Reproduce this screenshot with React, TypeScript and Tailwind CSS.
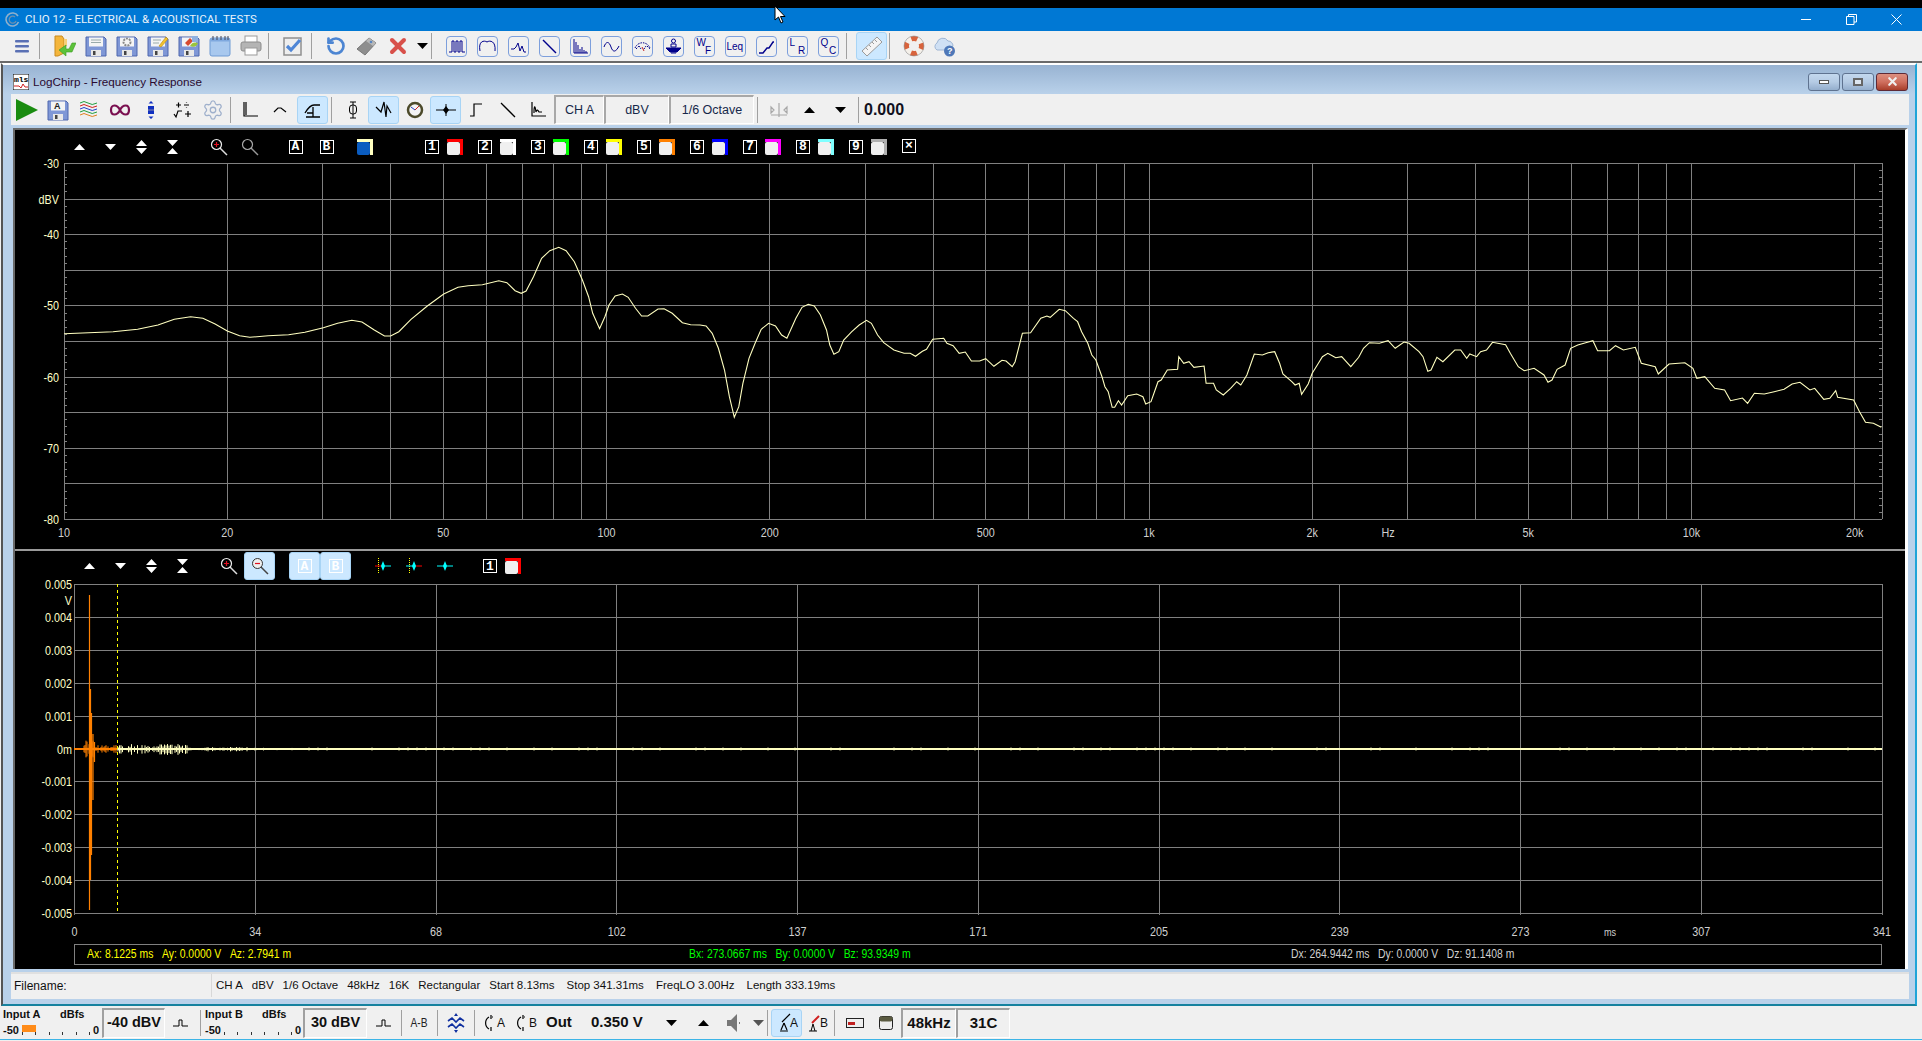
import { RotateCcw, Settings, X } from "lucide-react";
import type { ReactNode } from "react";

// ---- trace data, read off the reference (x, y in page pixels) ----
const seg1 = [[10,311],[70,308],[130,305],[190,298],[240,285],[280,268],[320,260],[350,265],[380,282],[410,303],[440,317],[465,322],[510,317],[560,314],[600,307],[645,293],[680,280],[715,271],[740,276],[770,300],[795,318],[810,318],[830,305],[860,268],[900,228],[940,192],[975,172],[1000,167],[1035,164],[1075,152],[1095,158],[1115,182],[1130,190],[1142,183],[1160,140],[1180,85],[1200,62],[1222,52],[1240,62],[1260,95],[1280,150],[1295,200],[1305,250],[1322,296],[1335,260],[1345,225],[1360,198],[1378,192],[1392,202],[1410,235],[1425,258],[1440,258],[1465,237],[1480,236],[1500,250],[1525,278],[1545,284]];
const seg2 = [[0,135],[15,138],[30,160],[45,205],[60,270],[72,350],[84,412],[95,380],[105,310],[120,235],[135,190],[150,148],[168,130],[185,138],[200,165],[213,175],[235,115],[250,82],[265,73],[280,78],[295,105],[310,150],[318,195],[328,223],[340,215],[352,180],[372,155],[390,135],[408,121],[420,130],[435,165],[450,188],[475,210],[500,220],[515,220],[528,229],[545,214],[555,208],[570,178],[597,175],[605,190],[620,197],[635,220],[650,216],[665,243],[685,243],[700,236],[720,259],[740,241],[750,243],[765,260],[772,245],[790,160],[810,158],[835,115],[850,108],[858,112],[880,88],[895,92],[915,115],[925,125],[935,155],[950,190],[960,225],[970,240],[985,290],[992,320],[1000,335],[1010,382],[1016,382],[1025,362],[1033,375],[1048,347],[1070,342],[1085,350],[1092,372],[1105,365],[1122,305],[1130,300],[1145,270],[1170,268],[1173,230],[1185,250],[1198,245],[1210,262],[1235,258],[1240,310],[1258,310],[1265,330],[1282,345],[1300,325],[1315,305],[1325,315],[1340,285],[1358,222],[1378,225],[1392,218],[1408,215],[1420,250],[1428,282],[1450,305],[1458,315],[1468,310],[1474,343],[1490,312],[1500,280],[1515,250],[1525,230],[1538,220],[1550,228]];
const seg3 = [[90,143],[105,140],[128,170],[148,142],[160,115],[175,98],[200,100],[222,92],[240,115],[262,96],[275,100],[300,125],[310,140],[322,184],[330,180],[345,142],[360,155],[390,120],[405,120],[420,145],[428,132],[445,140],[455,125],[470,120],[485,97],[518,104],[530,130],[550,170],[565,182],[590,175],[615,195],[625,217],[635,210],[648,178],[668,165],[682,115],[700,105],[720,98],[738,92],[750,122],[780,122],[795,107],[815,120],[845,112],[860,160],[895,170],[903,192],[930,162],[970,158],[990,175],[1000,205],[1020,200],[1045,235],[1070,240],[1085,272],[1115,264],[1128,280],[1145,250],[1170,252],[1195,245],[1220,238],[1240,222],[1260,217],[1285,240],[1297,235],[1320,268],[1335,265],[1350,242],[1355,262],[1395,270],[1410,305],[1425,337],[1445,340],[1465,352]];

const curve = [
  ...seg1.map(([x, y]) => [60 + x / 2.45, 230 + y / 3]),
  ...seg2.map(([x, y]) => [700 + x / 2.45, 280 + y / 3]),
  ...seg3.map(([x, y]) => [1300 + x / 2.52, 310 + y / 3]),
]
  .map(([x, y]) => `${x.toFixed(1)},${y.toFixed(1)}`)
  .join(" ");

const freqX = (f: number) => 64 + 542.5 * Math.log10(f / 10);
const freqs: number[] = [];
[10, 100, 1000].forEach((d) => {
  for (let i = 1; i < 10; i++) freqs.push(d * i);
});
freqs.push(10000, 20000);

// small repeatable noise for the impulse tail
function noise(n: number) {
  const v = Math.sin(n * 12.9898) * 43758.5453;
  return v - Math.floor(v);
}
let tail = "";
for (let x = 118; x < 300; x += 1.5) {
  const a = (x < 190 ? 5 : x < 250 ? 2 : 1.2) * noise(x);
  tail += `M${x} ${749 - a}V${749 + a * 1.2}`;
}
for (let x = 300; x < 1880; x += 9) {
  if (noise(x) > 0.6) tail += `M${x} 747.5V750.5`;
}
let orangeTail = "";
for (let x = 84; x < 117; x += 1) {
  const a = (x < 96 ? 9 : 4) * noise(x + 3);
  orangeTail += `M${x} ${749 - a}V${749 + a}`;
}

// the chart font in the reference is a narrow one, squeeze the Arial metric font
function Lbl({ x, y, children, k = 0.83, fontSize }: { x: number; y: number; children: ReactNode; k?: number; fontSize?: number }) {
  return (
    <text transform={`translate(${x} ${y}) scale(${k} 1)`} fontSize={fontSize}>
      {children}
    </text>
  );
}

// ---- toolbar pieces ----
function Btn({ w = "w-[31px]", active, children }: { w?: string; active?: boolean; children?: ReactNode }) {
  return (
    <div
      className={`flex h-[28px] shrink-0 items-center justify-center ${w} ${
        active ? "rounded-[3px] border border-[#a8d4f5] bg-[#cce8ff]" : ""
      }`}
    >
      {children}
    </div>
  );
}

function Sep({ className = "" }: { className?: string }) {
  return <div className={`h-[26px] w-[1px] shrink-0 bg-[#a0a0a0] ${className}`} />;
}

function Ico({ children, s = 22, v = 22 }: { children: ReactNode; s?: number; v?: number }) {
  return (
    <svg width={s} height={s} viewBox={`0 0 ${v} ${v}`} fill="none">
      {children}
    </svg>
  );
}

function Floppy({ children }: { children?: ReactNode }) {
  return (
    <Ico>
      <path d="M1 2h18l2 2v17H1z" fill="#7f97d6" stroke="#4f66ad" />
      <rect x="4" y="2.5" width="14" height="9" fill="#f4f4f4" />
      <rect x="6" y="15" width="10" height="6" fill="#e8e8e8" />
      <rect x="8" y="16" width="2.5" height="4" fill="#444" />
      {children}
    </Ico>
  );
}

function Outline({ children }: { children: ReactNode }) {
  return (
    <div className="flex h-[21px] w-[21px] items-center justify-center rounded-[4px] border border-[#7d9fdc]">
      <svg width="19" height="19" viewBox="0 0 19 19" fill="none" stroke="#00008b" strokeWidth="1">
        {children}
      </svg>
    </div>
  );
}

function OutlineText({ a, b }: { a: string; b: string }) {
  return (
    <Outline>
      <text x="1.5" y="9" fontSize="10" fill="#00008b" stroke="none" fontFamily="Liberation Sans">{a}</text>
      <text x="10" y="17" fontSize="10" fill="#00008b" stroke="none" fontFamily="Liberation Sans">{b}</text>
    </Outline>
  );
}

function Line({ d, w = 1.2, c = "#000" }: { d: string; w?: number; c?: string }) {
  return (
    <Ico>
      <path d={d} stroke={c} strokeWidth={w} />
    </Ico>
  );
}

function Tri({ up, c = "#000" }: { up?: boolean; c?: string }) {
  return (
    <svg width="11" height="6" viewBox="0 0 11 6">
      <path d={up ? "M5.5 0L11 6H0z" : "M0 0H11L5.5 6z"} fill={c} />
    </svg>
  );
}

function UpDown() {
  return (
    <svg width="11" height="14" viewBox="0 0 11 14" fill="#fff">
      <path d="M5.5 0L11 6H0zM0 8H11L5.5 14z" />
    </svg>
  );
}

function Hourglass() {
  return (
    <svg width="11" height="14" viewBox="0 0 11 14" fill="#fff">
      <path d="M0 0H11L5.5 6zM5.5 8L11 14H0z" />
    </svg>
  );
}

function Lens({ sign, dim }: { sign?: "+" | "-"; dim?: boolean }) {
  return (
    <svg width="18" height="18" viewBox="0 0 18 18" fill="none">
      <path d="M10 10l7 7" stroke={dim ? "#999" : "#ddd"} strokeWidth="1.5" />
      <circle cx="6.5" cy="6.5" r="5" stroke={dim ? "#aaa" : "#eee"} strokeWidth="1.2" fill="#000" />
      {sign && <path d={sign === "+" ? "M4 6.5h5M6.5 4v5" : "M4 6.5h5"} stroke="#e01020" strokeWidth="1.2" />}
    </svg>
  );
}

function Boxed({ t }: { t: string }) {
  return (
    <div className="flex h-[14px] w-[14px] shrink-0 items-center justify-center border border-white font-['Liberation_Mono',monospace] text-[13px] font-bold leading-none text-white">
      {t}
    </div>
  );
}

function Swatch({ color, inner = "bg-[#f0f0f0]" }: { color: string; inner?: string }) {
  return (
    <div className={`flex h-[16px] w-[16px] shrink-0 border-t-[3px] border-r-[3px] ${color}`}>
      <div className={`h-[13px] w-[13px] rounded-[2px] ${inner}`} />
    </div>
  );
}

function Star({ left, right, top }: { left?: string; right?: string; top?: boolean }) {
  return (
    <svg width="16" height="16" viewBox="0 0 16 16" fill="none">
      {top && <path d="M3.5 0V16" stroke="#ffff00" strokeDasharray="1 1" />}
      <path d="M0 8H8" stroke={left ?? "#00ffff"} />
      <path d="M8 8H16" stroke={right ?? "#00ffff"} />
      <path d="M8 3L10 8L8 13L6 8z" fill="#00ffff" />
    </svg>
  );
}

const channels = [
  ["1", "border-[#ff0000]"],
  ["2", "border-[#ffffff]"],
  ["3", "border-[#00ff00]"],
  ["4", "border-[#ffff00]"],
  ["5", "border-[#ff8000]"],
  ["6", "border-[#0000ff]"],
  ["7", "border-[#ff00ff]"],
  ["8", "border-[#80ffff]"],
  ["9", "border-[#b0b0b0]"],
];

function Pulse() {
  return <Line d="M3 14h6V8h3v6h6" w={1} />;
}

function Meter({ name, bar }: { name: string; bar?: boolean }) {
  return (
    <div className="flex w-[98px] shrink-0 flex-col text-[11px] font-bold leading-none">
      <div className="flex h-[15px] items-center">
        <span className="w-[57px]">{name}</span>
        <span>dBfs</span>
      </div>
      <div className="relative flex h-[16px] items-center">
        <span className="w-[19px]">-50</span>
        <div className="flex h-[10px] w-[68px] items-end justify-between">
          {[0, 1, 2, 3, 4, 5].map((i) => (
            <div key={i} className="h-[3px] w-[1px] bg-[#333]" />
          ))}
        </div>
        <span className="ml-[3px]">0</span>
        {bar && <div className="absolute left-[19px] top-[3px] h-[7px] w-[14px] bg-[#ff8c1a]" />}
      </div>
    </div>
  );
}

function ValueBox({ w, children, size = "text-[15px]" }: { w: string; children: ReactNode; size?: string }) {
  return (
    <div className={`flex h-[30px] shrink-0 items-center justify-center border-t-2 border-l-2 border-t-[#a0a0a0] border-l-[#a0a0a0] border-r border-b border-r-white border-b-white font-bold ${w} ${size}`}>
      {children}
    </div>
  );
}

function TabBox({ w, children }: { w: string; children: ReactNode }) {
  return (
    <div className={`flex h-[29px] shrink-0 items-center justify-center border-t-2 border-l-2 border-t-[#a8a8a8] border-l-[#a8a8a8] border-r border-b border-r-white border-b-white text-[12.5px] text-[#16284a] ${w}`}>
      {children}
    </div>
  );
}

function WinBtn({ red, children }: { red?: boolean; children: ReactNode }) {
  return (
    <div
      className={`flex h-[18px] w-[32px] items-center justify-center rounded-[3px] border ${
        red
          ? "border-[#5e2a36] bg-gradient-to-b from-[#dc8f80] via-[#cf6f5e] to-[#a83e2a]"
          : "border-[#5f7390] bg-gradient-to-b from-[#c3d8ee] via-[#b5cbe4] to-[#94aecd]"
      }`}
    >
      {children}
    </div>
  );
}

function FreqChart() {
  const labels: [string, number][] = [["10", 10], ["20", 20], ["50", 50], ["100", 100], ["200", 200], ["500", 500], ["1k", 1000], ["2k", 2000], ["5k", 5000], ["10k", 10000], ["20k", 20000]];
  return (
    <svg viewBox="15 163 1890 386" width="1890" height="386" className="block overflow-visible font-['Liberation_Sans',sans-serif]">
      <g stroke="#808080" shapeRendering="crispEdges">
        {freqs.map((f) => (
          <path key={f} d={`M${freqX(f)} 163V519`} />
        ))}
        <path d="M1882 163V519" />
        {Array.from({ length: 11 }, (_, i) => (
          <path key={i} d={`M64 ${163.5 + i * 35.6}H1882`} />
        ))}
        {Array.from({ length: 50 }, (_, i) => (
          <path key={i} d={`M64 ${163.5 + i * 7.12}h3M1879 ${163.5 + i * 7.12}h3`} />
        ))}
      </g>
      <polyline points={curve} fill="none" stroke="#ffffc0" strokeWidth="1.1" />
      <g fill="#ffffc8" fontSize="13" textAnchor="end">
        {[-30, -40, -50, -60, -70, -80].map((v, i) => (
          <Lbl key={v} x={59} y={168 + i * 71.2}>{v}</Lbl>
        ))}
        <Lbl x={59} y={204}>dBV</Lbl>
      </g>
      <g fill="#d0d0d0" fontSize="13" textAnchor="middle">
        {labels.map(([t, f]) => (
          <Lbl key={t} x={freqX(f)} y={537}>{t}</Lbl>
        ))}
        <Lbl x={1388} y={537}>Hz</Lbl>
      </g>
    </svg>
  );
}

function ImpulseChart() {
  const ticks = ["0", "34", "68", "102", "137", "171", "205", "239", "273", "307", "341"];
  const ys = ["0.005", "0.004", "0.003", "0.002", "0.001", "0m", "-0.001", "-0.002", "-0.003", "-0.004", "-0.005"];
  return (
    <svg viewBox="15 584 1890 360" width="1890" height="360" className="block overflow-visible font-['Liberation_Sans',sans-serif]">
      <g stroke="#808080" shapeRendering="crispEdges">
        {ticks.map((_, i) => (
          <path key={i} d={`M${74.5 + i * 180.75} 584V915`} />
        ))}
        {ys.map((_, i) => (
          <path key={i} d={`M74 ${584.5 + i * 32.9}H1882`} />
        ))}
      </g>
      <path d="M118 749H1882" stroke="#ffffc0" strokeWidth="2" />
      <path d={tail} stroke="#ffffc0" strokeWidth="1" />
      <path d="M74 749H117" stroke="#ff8000" strokeWidth="2" />
      <path d={orangeTail} stroke="#ff8000" strokeWidth="1" />
      <path d="M89.5 595V910M90.5 689V880M91.5 713V855M93 734V800M94.5 742V762" stroke="#ff8000" strokeWidth="1.2" />
      <path d="M117.5 584V913" stroke="#ffff00" strokeDasharray="3 3" shapeRendering="crispEdges" />
      <g fill="#ffffc8" fontSize="13" textAnchor="end">
        {ys.map((t, i) => (
          <Lbl key={t} x={72} y={589 + i * 32.9}>{t}</Lbl>
        ))}
        <Lbl x={72} y={605}>V</Lbl>
      </g>
      <g fill="#d0d0d0" fontSize="13" textAnchor="middle">
        {ticks.map((t, i) => (
          <Lbl key={t} x={i === 0 ? 74.5 : i === 10 ? 1882 : 74.5 + i * 180.75} y={936}>{t}</Lbl>
        ))}
        <Lbl x={1610} y={936} fontSize={11}>ms</Lbl>
      </g>
    </svg>
  );
}

export default function App() {
  return (
    <div className="relative flex h-[1041px] w-full flex-col overflow-hidden bg-black font-['Liberation_Sans',sans-serif] text-black">
      {/* app title bar */}
      <div className="mt-[8px] flex h-[23px] shrink-0 items-center bg-[#0078d4] pl-[4px] text-white">
        <svg width="17" height="17" viewBox="0 0 17 17" fill="none">
          <path d="M14 5A6.5 6.5 0 1 0 14.500 11" stroke="#8fb0cc" strokeWidth="1.6" />
          <path d="M11 6A3.500 3.500 0 1 0 12 10" stroke="#6d8fae" strokeWidth="1.3" />
        </svg>
        <span className="ml-[4px] font-['Roboto',sans-serif] text-[11.5px] text-[#e8f2fb]">CLIO 12 - ELECTRICAL &amp; ACOUSTICAL TESTS</span>
        <div className="ml-auto flex items-center">
          <div className="flex w-[46px] justify-center">
            <div className="h-[1px] w-[10px] bg-white" />
          </div>
          <div className="flex w-[44px] justify-center">
            <svg width="11" height="11" viewBox="0 0 11 11" fill="none" stroke="#fff">
              <path d="M.5 2.500h7.500v8H.5zM2.500 2.500V.5h8v7.500H8" />
            </svg>
          </div>
          <div className="flex w-[46px] justify-center">
            <svg width="11" height="11" viewBox="0 0 11 11" stroke="#fff">
              <path d="M.5.5l10 10M10.500.5l-10 10" />
            </svg>
          </div>
          <div className="w-[3px]" />
        </div>
      </div>

      {/* main toolbar */}
      <div className="flex h-[30px] shrink-0 items-center bg-[#f0f0f0] pl-[6px]">
        <Btn>
          <svg width="14" height="14" viewBox="0 0 14 14" fill="#5a70b4">
            <rect y="1" width="14" height="2.4" rx="1" />
            <rect y="6" width="14" height="2.4" rx="1" />
            <rect y="11" width="14" height="2.4" rx="1" />
          </svg>
        </Btn>
        <Sep className="ml-[2px] mr-[9px]" />
        <Btn>
          <Ico>
            <path d="M1 1h7l2 3v14l-6 3H1z" fill="#f4b63c" stroke="#c98a1f" />
            <path d="M10 4h3v7h-3z" fill="#f7cf77" />
            <path d="M22 8l-4 9h-6v4L5 15l7-5v4h3l3-6z" fill="#5cc23a" stroke="#3b9a22" strokeWidth=".6" />
          </Ico>
        </Btn>
        <Btn><Floppy><path d="M6 5h10M6 7.500h10" stroke="#9aa" /></Floppy></Btn>
        <Btn><Floppy><circle cx="11" cy="7" r="3.500" fill="none" stroke="#888" strokeWidth="2" strokeDasharray="2 1" /></Floppy></Btn>
        <Btn><Floppy><path d="M6 5h8M6 8h6" stroke="#9aa" /><path d="M12 11L19 2l2 2-7 8z" fill="#f2c230" stroke="#b98c10" strokeWidth=".6" /></Floppy></Btn>
        <Btn><Floppy><path d="M7 8l5-5 3 3-5 5z" fill="#d84a30" /><path d="M12 11c2-4 5-4 8-3-1 3-4 5-8 3z" fill="#9ac43c" /><rect x="14" y="1" width="6" height="6" fill="#8fb0e0" /></Floppy></Btn>
        <Btn>
          <Ico>
            <rect x="1" y="3" width="20" height="18" rx="2" fill="#a8c8ee" stroke="#6f9bd4" />
            <rect x="1.5" y="3.500" width="19" height="3" fill="#7fa8de" />
            <path d="M4 1v4M8 1v4M12 1v4M16 1v4M19 1v4" stroke="#445" strokeWidth="1" />
          </Ico>
        </Btn>
        <Btn>
          <Ico>
            <rect x="5" y="1" width="12" height="7" fill="#fff" stroke="#999" />
            <rect x="1" y="7" width="20" height="9" rx="2" fill="#b4b4b4" stroke="#8c8c8c" />
            <rect x="5" y="13" width="12" height="7" fill="#fff" stroke="#999" />
          </Ico>
        </Btn>
        <Sep className="ml-[2px] mr-[8px]" />
        <Btn>
          <Ico>
            <rect x="2" y="3" width="17" height="17" fill="#eee" stroke="#8f8f8f" strokeWidth="1.5" />
            <path d="M5 11l4 4 9-10" stroke="#4f86d6" strokeWidth="3.2" />
          </Ico>
        </Btn>
        <Sep className="ml-[3px] mr-[8px]" />
        <Btn><RotateCcw size={20} stroke="#4c85d2" strokeWidth={3.2} /></Btn>
        <Btn>
          <Ico>
            <path d="M1 14L13 3l7 5L9 20z" fill="#8e8e8e" stroke="#777" />
            <path d="M13 3l7 5-3 3-7-5z" fill="#b8b8b8" />
            <circle cx="15" cy="7" r="1.3" fill="#5a86c0" />
          </Ico>
        </Btn>
        <Btn><X size={24} stroke="#d8504a" strokeWidth={4} /></Btn>
        <Btn w="w-[18px]"><Tri /></Btn>
        <Sep className="mr-[9px]" />
        <Btn><Outline><path d="M2 15h3V4h2v11h2V4h2v11h2V4h2v11h3" /></Outline></Btn>
        <Btn><Outline><path d="M2 14C0 4 6 3 9 5c3-2 9-1 8 9" /></Outline></Btn>
        <Btn><Outline><path d="M2 12h3l2-2 2-4 2 8 2-5 2 6h2" /></Outline></Btn>
        <Btn><Outline><path d="M3 3l13 13" strokeWidth="1.4" /></Outline></Btn>
        <Btn><Outline><path d="M3 2v14h14M5 16V5M7 16V8M9 16v-4M11 16v-6M13 16v-3M15 16v-2" /></Outline></Btn>
        <Btn><Outline><path d="M2 10c2-6 5-6 7 0s5 5 8-1" /></Outline></Btn>
        <Btn><Outline><path d="M2 11C5 4 14 4 17 11M3 12l3-3M6 9l2 3M11 12l2-3M14 9l3 3" strokeDasharray="1.5 1" /><path d="M9 10l2 4" stroke="#c02020" /></Outline></Btn>
        <Btn>
          <Outline>
            <circle cx="9.5" cy="4" r="2" />
            <path d="M7 7h5v3H7z" />
            <path d="M2 11h15l-4 4H6z" fill="#00008b" />
            <path d="M7 16h5" />
          </Outline>
        </Btn>
        <Btn><OutlineText a="W" b="F" /></Btn>
        <Btn>
          <Outline>
            <text x=".5" y="13" fontSize="10" fill="#00008b" stroke="none" fontFamily="Liberation Sans">Leq</text>
          </Outline>
        </Btn>
        <Btn><Outline><path d="M2 16h4l4-5h2l4-6h1" strokeWidth="1.4" /></Outline></Btn>
        <Btn><OutlineText a="L" b="R" /></Btn>
        <Btn><OutlineText a="Q" b="C" /></Btn>
        <Sep className="ml-[2px] mr-[9px]" />
        <Btn active>
          <Ico>
            <path d="M1 16L16 2l5 5L6 21z" fill="#f4f4f4" stroke="#9a9a9a" />
            <path d="M5 13l2 2M8 10l2 2M11 7l2 2M14 5l2 2" stroke="#9a9a9a" />
          </Ico>
        </Btn>
        <Sep className="ml-[2px] mr-[8px]" />
        <Btn>
          <Ico>
            <circle cx="11" cy="11" r="7.500" stroke="#f4f0ea" strokeWidth="5" />
            <circle cx="11" cy="11" r="7.500" stroke="#d8633c" strokeWidth="5" strokeDasharray="6 5.800" strokeDashoffset="3" />
            <circle cx="11" cy="11" r="10" stroke="#8e8e8e" strokeWidth=".6" />
          </Ico>
        </Btn>
        <Btn>
          <Ico>
            <path d="M3 15a4 4 0 0 1 0-7 6 6 0 0 1 11-2 5 5 0 0 1 5 5l-5 4z" fill="#cfe0f4" stroke="#9fb6d4" />
            <circle cx="15.500" cy="16" r="5.500" fill="#4f78b8" />
            <text x="13" y="19" fontSize="9" fontWeight="bold" fill="#fff" fontFamily="Liberation Sans">?</text>
          </Ico>
        </Btn>
      </div>

      <div className="h-[2px] shrink-0 bg-[#6a6a6a]" />

      <div className="flex flex-1 flex-col bg-[#f0f0f0]">
        <div className="ml-[1px] mr-[5px] flex h-[943px] flex-col border-x-2 border-t-2 border-b-2 border-l-[#555] border-r-[#1fa4d8] border-t-white border-b-[#16829f] bg-[#b9d1ea]">
          {/* child title */}
          <div className="flex h-[29px] shrink-0 items-center bg-gradient-to-b from-[#98b3d2] to-[#b9d1ea] pl-[10px] pr-[7px] pt-[4px]">
            <svg width="16" height="16" viewBox="0 0 16 16">
              <rect width="16" height="16" fill="#fff" stroke="#000" />
              <text x="1" y="8" fontSize="8" fontWeight="bold" fill="#000" fontFamily="Liberation Mono">mls</text>
              <path d="M1 12h5l2 2 2-4 2 3h3" stroke="#d02020" fill="none" />
            </svg>
            <span className="ml-[4px] text-[11.7px] text-[#2a0a30]">LogChirp - Frequency Response</span>
            <div className="ml-auto flex gap-[2px]">
              <WinBtn><div className="h-[4px] w-[10px] border border-[#555] bg-white" /></WinBtn>
              <WinBtn><div className="h-[8px] w-[10px] border-2 border-[#666] bg-[#dde6f0]" /></WinBtn>
              <WinBtn red><X size={13} stroke="#f0f0f0" strokeWidth={4} /></WinBtn>
            </div>
          </div>

          {/* child toolbar */}
          <div className="ml-[8px] mr-[6px] flex h-[31px] shrink-0 items-center bg-[#f0f0f0]">
            <Btn>
              <svg width="22" height="22" viewBox="0 0 22 22"><path d="M0 0L22 11L0 22z" fill="#1a8c10" /></svg>
            </Btn>
            <Btn><Floppy><text x="7" y="10" fontSize="9" fontWeight="bold" fill="#222" fontFamily="Liberation Sans">A</text></Floppy></Btn>
            <Btn>
              <Ico>
                <path d="M2 4q4-3 8 0t9 0" stroke="#20a040" />
                <path d="M2 7q4-3 8 0t9 0" stroke="#d02020" />
                <path d="M2 10q4-3 8 0t9 0" stroke="#2040d0" />
                <path d="M2 13q4-3 8 0t9 0" stroke="#20a040" />
                <path d="M2 16q4-3 8 0t9 0" stroke="#e08020" />
              </Ico>
            </Btn>
            <Btn><Line d="M11 11C8 5 2 5 2 11s6 6 9 0 9-6 9 0-6 6-9 0" w={2.2} c="#7a1050" /></Btn>
            <Btn>
              <Ico>
                <path d="M11 2l-2.500 2.500h5zM11 20l-2.500-2.500h5z" fill="#1030c0" />
                <rect x="8" y="7" width="6" height="8" fill="#1030c0" />
                <path d="M8 11h6" stroke="#88a" />
              </Ico>
            </Btn>
            <Btn><Line d="M5 6h5M7.500 3.500v5M13 6h5M15.500 3.500v.5M15.500 8v.5M3 15l2 3 2-6h4M14 15h6M17 12v6" /></Btn>
            <Btn><Settings size={22} stroke="#9fb0cc" strokeWidth={1.4} /></Btn>
            <Sep className="ml-[2px] mr-[4px]" />
            <Btn><Line d="M4 3v14h14M6 3v13" /></Btn>
            <Btn><Line d="M3 13l4-4h3l5 4" /></Btn>
            <Btn active><Line d="M3 14c3-5 6-8 9-8h6M11 8v10M4 18h14M5 14h6" w={1.3} /></Btn>
            <Sep className="ml-[3px] mr-[5px]" />
            <Btn>
              <Ico>
                <rect x="7.500" y="6" width="7" height="9" rx="3" stroke="#000" />
                <path d="M11 3v16M8 3h6M8 19h6" stroke="#000" />
              </Ico>
            </Btn>
            <Btn active><Line d="M3 8l5 5 3-10 2 15 1-11 4 7" /></Btn>
            <Btn>
              <Ico>
                <circle cx="11" cy="11" r="7" fill="#f4f4f4" stroke="#4c4a2a" strokeWidth="2.500" />
                <path d="M11 11l4-4" stroke="#d02020" />
                <path d="M11 11L7 8" stroke="#2040c0" />
              </Ico>
            </Btn>
            <Btn active>
              <Ico>
                <path d="M1 11h20M11 5v12" stroke="#000" />
                <path d="M11 7l3 4-3 4-3-4z" fill="#000" />
              </Ico>
            </Btn>
            <Btn><Line d="M4 17h4V5h8" /></Btn>
            <Btn><Line d="M4 4l14 14" w={1.3} /></Btn>
            <Btn><Line d="M4 3v14h14M6 14c0-8 1-8 2-1 1-3 2-2 3 0h3" /></Btn>
            <TabBox w="w-[50px]">CH A</TabBox>
            <TabBox w="w-[65px]">dBV</TabBox>
            <TabBox w="w-[85px]">1/6 Octave</TabBox>
            <Sep className="ml-[3px] mr-[5px]" />
            <Btn><Line d="M3 8l3 3-3 3zM19 8l-3 3 3 3zM11 4v14M3 16h16" c="#a8a8a8" /></Btn>
            <Btn><Tri up /></Btn>
            <Btn><Tri /></Btn>
            <Sep className="ml-[2px]" />
            <span className="ml-[5px] text-[16px] font-bold text-[#101020]">0.000</span>
          </div>

          {/* chart panels */}
          <div className="ml-[10px] mr-[7px] mt-[3px] flex-1 border-t-2 border-l-2 border-r-[3px] border-t-[#6a6a6a] border-l-[#6a6a6a] border-r-white bg-black">
            <div className="flex h-[33px] items-center pl-[49px]">
              <Btn><Tri up c="#fff" /></Btn>
              <Btn><Tri c="#fff" /></Btn>
              <Btn><UpDown /></Btn>
              <Btn><Hourglass /></Btn>
              <div className="ml-[15px]" />
              <Btn><Lens sign="+" /></Btn>
              <Btn><Lens dim /></Btn>
              <div className="ml-[15px]" />
              <Btn><Boxed t="A" /></Btn>
              <Btn><Boxed t="B" /></Btn>
              <div className="ml-[7px]" />
              <Btn>
                <Swatch color="border-[#ffffc0]" inner="bg-[#0a5cc0]" />
              </Btn>
              <div className="ml-[45px] flex gap-[15px]">
                {channels.map(([n, c]) => (
                  <div key={n} className="flex items-center gap-[8px]">
                    <Boxed t={n} />
                    <Swatch color={c} />
                  </div>
                ))}
                <Boxed t="×" />
              </div>
            </div>
            <FreqChart />
            <div className="h-[2px] bg-[#9a9a9a]" />
            <div className="flex h-[33px] items-center pb-[3px] pl-[59px]">
              <Btn><Tri up c="#fff" /></Btn>
              <Btn><Tri c="#fff" /></Btn>
              <Btn><UpDown /></Btn>
              <Btn><Hourglass /></Btn>
              <div className="ml-[15px]" />
              <Btn><Lens sign="+" /></Btn>
              <Btn active><svg width="18" height="18" viewBox="0 0 18 18" fill="none"><path d="M10 10l7 7" stroke="#444" strokeWidth="1.500" /><circle cx="6.500" cy="6.500" r="5" stroke="#333" fill="#eee" /><path d="M4 6.500h5" stroke="#e01020" strokeWidth="1.200" /></svg></Btn>
              <div className="ml-[14px]" />
              <Btn active><Boxed t="A" /></Btn>
              <Btn active><Boxed t="B" /></Btn>
              <div className="ml-[16px]" />
              <Btn><Star left="#ff0000" top /></Btn>
              <Btn><Star right="#ff0000" top /></Btn>
              <Btn><Star /></Btn>
              <div className="ml-[23px] flex items-center gap-[8px]">
                <Boxed t="1" />
                <Swatch color="border-[#ff0000]" />
              </div>
            </div>
            <ImpulseChart />
            <div className="ml-[59px] mr-[23px] flex h-[21px] items-center border border-[#808080] pb-[1px] pl-[12px] text-[12px]">
              <div className="w-[602px]">
                <div className="flex origin-left scale-x-[0.865] gap-[10px] whitespace-nowrap text-[#ffff00]">
                  <span>Ax: 8.1225 ms</span>
                  <span>Ay: 0.0000 V</span>
                  <span>Az: 2.7941 m</span>
                </div>
              </div>
              <div className="w-[602px]">
                <div className="flex origin-left scale-x-[0.865] gap-[10px] whitespace-nowrap text-[#00ff00]">
                  <span>Bx: 273.0667 ms</span>
                  <span>By: 0.0000 V</span>
                  <span>Bz: 93.9349 m</span>
                </div>
              </div>
              <div className="flex origin-left scale-x-[0.865] gap-[10px] whitespace-nowrap text-[#d0d0d0]">
                <span>Dx: 264.9442 ms</span>
                <span>Dy: 0.0000 V</span>
                <span>Dz: 91.1408 m</span>
              </div>
            </div>
          </div>

          {/* status line */}
          <div className="ml-[8px] mr-[6px] mt-[3px] flex h-[27px] shrink-0 items-center border-t-2 border-t-[#e0e0e0] bg-[#f0f0f0] pb-[2px] text-[11.5px] text-[#101010]">
            <span className="ml-[3px] w-[197px] text-[12px]">Filename:</span>
            <div className="h-[23px] w-[1px] bg-[#d8d8d8]" />
            <div className="ml-[4px] flex gap-[9px]">
              <span>CH A</span>
              <span>dBV</span>
              <span>1/6 Octave</span>
              <span>48kHz</span>
              <span>16K</span>
              <span>Rectangular</span>
              <span>Start 8.13ms</span>
              <span className="ml-[3px]">Stop 341.31ms</span>
              <span className="ml-[3px]">FreqLO 3.00Hz</span>
              <span className="ml-[3px]">Length 333.19ms</span>
            </div>
          </div>
          <div className="h-[5px] shrink-0" />
        </div>

        {/* bottom toolbar */}
        <div className="flex h-[33px] shrink-0 items-center pl-[3px] text-[#101010]">
          <Meter name="Input A" bar />
          <div className="ml-[1px]" />
          <ValueBox w="w-[63px]" size="text-[14.5px]">-40 dBV</ValueBox>
          <Btn w="w-[32px]"><Pulse /></Btn>
          <Sep className="ml-[3px] mr-[4px]" />
          <Meter name="Input B" />
          <ValueBox w="w-[64px]" size="text-[14.5px]">30 dBV</ValueBox>
          <Btn w="w-[34px]"><Pulse /></Btn>
          <Sep />
          <Btn w="w-[35px]"><span className="scale-x-[0.85] text-[12px] text-[#222]">A-B</span></Btn>
          <Sep />
          <Btn w="w-[36px]">
            <Ico>
              <path d="M3 9l4-3 4 4 4-4 4 3M3 15l4-3 4 4 4-4 4 3" stroke="#1030a0" strokeWidth="1.6" />
              <path d="M11 1l-2 3h4zM11 21l-2-3h4z" fill="#1030a0" />
            </Ico>
          </Btn>
          <Sep className="mr-[3px]" />
          <Btn w="w-[32px]">
            <Line d="M6 5A7 7 0 0 0 6 17M9 5h1M8 3v4M8 15v4" />
            <span className="-ml-[8px] text-[12px]">A</span>
          </Btn>
          <Btn w="w-[32px]">
            <Line d="M6 5A7 7 0 0 0 6 17M9 5h1M8 3v4M8 15v4" />
            <span className="-ml-[8px] text-[12px]">B</span>
          </Btn>
          <span className="ml-[4px] w-[45px] text-[15px] font-bold">Out</span>
          <span className="w-[65px] text-[15px] font-bold">0.350 V</span>
          <Btn><Tri /></Btn>
          <Btn w="w-[32px]"><Tri up /></Btn>
          <Btn w="w-[30px]">
            <svg width="14" height="18" viewBox="0 0 14 18">
              <path d="M0 6h4l6-6v18l-6-6H0z" fill="#777" />
              <path d="M12 8l1 1-1 1" stroke="#777" fill="none" />
            </svg>
          </Btn>
          <Btn w="w-[18px]"><Tri c="#555" /></Btn>
          <Sep />
          <div className="ml-[3px]" />
          <Btn active>
            <Line d="M7 10l8-8M9 11l-3 7M9 11l3 7M5 19h8" c="#000" />
            <span className="-ml-[7px] text-[12px]">A</span>
          </Btn>
          <Btn>
            <svg width="18" height="22" viewBox="0 0 18 22" fill="none">
              <path d="M5 11l7-7" stroke="#d02020" strokeWidth="2" />
              <path d="M6 12l-2 7M6 12l2 7M2 19h8" stroke="#000" />
            </svg>
            <span className="-ml-[5px] text-[12px]">B</span>
          </Btn>
          <div className="ml-[1px]" />
          <Sep className="mr-[4px]" />
          <Btn>
            <svg width="18" height="12" viewBox="0 0 18 12">
              <rect x=".5" y="1.500" width="17" height="9" fill="#eee" stroke="#222" />
              <rect x="2" y="5" width="7" height="3" fill="#c02020" />
            </svg>
          </Btn>
          <Btn>
            <svg width="14" height="14" viewBox="0 0 14 14">
              <rect x=".5" y=".5" width="13" height="13" rx="2" fill="#eee" stroke="#222" />
              <rect x=".5" y=".5" width="13" height="5" rx="2" fill="#5a5a40" />
            </svg>
          </Btn>
          <ValueBox w="w-[55px]">48kHz</ValueBox>
          <ValueBox w="w-[54px]">31C</ValueBox>
        </div>
        <div className="h-[1px] bg-[#3cb4e6]" />
      </div>

      {/* mouse pointer caught in the shot */}
      <svg width="13" height="19" viewBox="0 0 13 19" className="absolute left-[774px] top-[5px]">
        <path d="M1 1v14l3.500-3 2.500 6 2-1-2.500-5.500H11z" fill="#fff" stroke="#000" />
      </svg>
    </div>
  );
}
